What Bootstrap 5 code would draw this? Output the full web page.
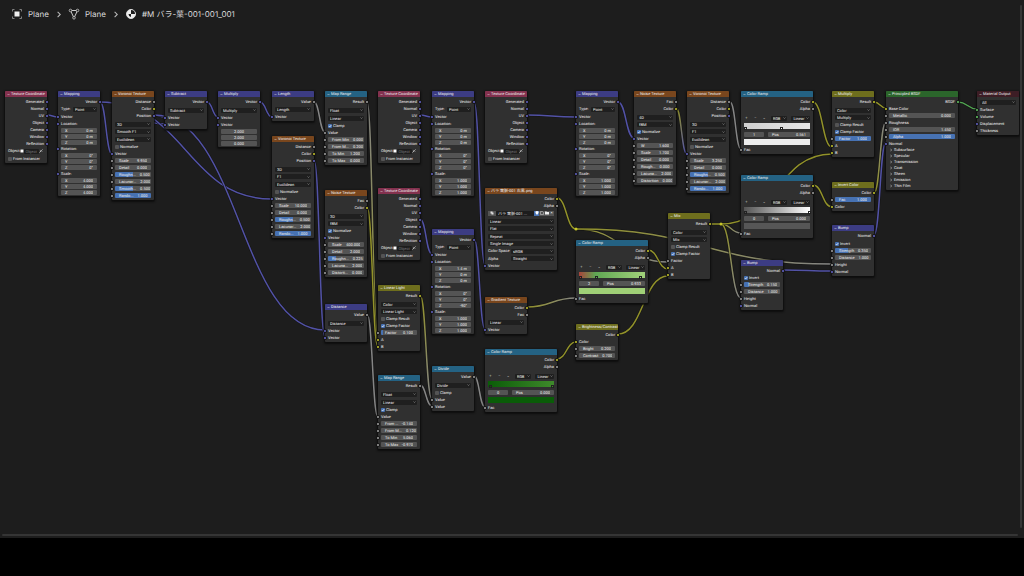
<!DOCTYPE html>
<html lang="en">
<head>
<meta charset="utf-8">
<meta name="viewport" content="width=device-width, initial-scale=1">
<title>Shader Editor</title>
<link href="https://cdn.jsdelivr.net/npm/bootstrap@5.3.0/dist/css/bootstrap.min.css" rel="stylesheet">
<style>
body{background:#000;color:#dcdcdc;font-family:Inter,"Noto Sans CJK JP",sans-serif;text-rendering:geometricPrecision}
input,select,button{text-rendering:geometricPrecision}
.editor{background:#1d1d1d;height:calc(100vh - 38px)}
.crumbs{font-size:8px;line-height:12px;padding:8px 11px;gap:6px}
.crumbs a{color:#dcdcdc;gap:5px}
.crumbs svg{width:12px;height:12px}
.crumbs .sep{width:7px}
.graph{inset:0;font-family:Roboto,"Noto Sans CJK JP",sans-serif}
.wires{width:100%;height:100%;left:0;top:0}
.wires path{fill:none;stroke-width:1.5}
.wires .casing{stroke:#141414;stroke-width:2.5}
.scroll-v{right:2px;top:5px;bottom:10px;width:2px;background:#353535}
.scroll-h{left:2px;right:6px;bottom:2px;height:2px;background:#353535}
.node{width:42px;background:#303030;border-radius:1px;padding-bottom:1px;font-size:4px;color:#f0f0f0;box-shadow:0 1px 2px 1px #0d0d0d}
.node.wide{width:72px}
.node-head{height:6px;margin-bottom:1px;line-height:6px;padding-left:2px;gap:1px;font-size:4px;border-radius:1px 1px 0 0;white-space:nowrap}
.node-head svg{width:3px;height:3px;flex:none}
.tone-input{background:#83314e}.tone-vector{background:#3c3c83}.tone-texture{background:#79461d}
.tone-convert{background:#246283}.tone-color{background:#6e6e1d}.tone-shader{background:#2b652b}.tone-output{background:#3d1d25}
.line{height:7px;line-height:7px;padding:0 3px;white-space:nowrap}
.line.tall{height:8px;line-height:8px}
.line.short{height:6px;line-height:6px}
.space{height:1px}
.socket{width:2px;height:2px;border-radius:50%;top:3px;box-shadow:0 0 0 1px #151515}
.socket.in{left:-1px}.socket.out{right:-1px}
.v{background:#6363c7}.y{background:#c7c729}.g{background:#a1a1a1}.s{background:#63c763}
.pick,.slot,.number{font-size:4px;line-height:5px;height:5px;border:0;border-radius:1px;color:#f0f0f0;padding:0 2px;min-width:0;box-shadow:none}
.pick{appearance:none;width:100%;background:#1f1f1f url("data:image/svg+xml,%3Csvg xmlns='http://www.w3.org/2000/svg' viewBox='0 0 6 4'%3E%3Cpath d='M1 1l2 2 2-2' fill='none' stroke='%23aaa'/%3E%3C/svg%3E") no-repeat right 1px center/3px 2px}
.pick.type{width:24px}.pick.image{width:43px}.pick.mode{width:17px}.pick.curve{width:19px}
.slot{background:#1d1d1d}
.slot.object{width:15px;padding:0 1px}
.slot::placeholder{color:#777}
.number{background:#545454;overflow:hidden}
.number.index{width:20px}
.number label{font-size:4px;line-height:5px}
.number > input{all:unset;width:14px;height:5px;text-align:right;font-size:4px;line-height:5px;color:#f0f0f0}
.tick{appearance:none;width:4px;height:4px;border-radius:1px;background:#545454;margin:0 1px 0 0}
.tick:checked{background:#4772b3 url("data:image/svg+xml,%3Csvg xmlns='http://www.w3.org/2000/svg' viewBox='0 0 8 8'%3E%3Cpath d='M1.500 4l2 2 3-4' fill='none' stroke='%23fff' stroke-width='1.300'/%3E%3C/svg%3E") center/4px 4px}
.tool{border:0;background:#545454;color:#eee;padding:0;width:5px;height:5px;line-height:4px;font-size:4px}
.tool.browse{width:8px}
.tool.on{background:#4772b3}
.tool svg{width:4px;height:4px;display:block;margin:auto}
.flat{border:0;background:none;padding:0;color:#c0c0c0;font-size:4px;line-height:8px;width:5px}
.ramp{height:6px;margin:0 3px}
.stop{width:3px;height:3px;bottom:-1px;margin-left:-1px;border:1px solid #222}
.swatch{height:6px;margin:1px 3px 1px}
.panel{border:0;background:none;color:#f0f0f0;display:flex;align-items:center;font-size:4px;line-height:6px;height:6px;padding:0 0 0 4px;gap:2px}
.panel svg{width:2px;height:4px}
.mini{width:4px;height:4px}
</style>
</head>
<body class="vh-100 overflow-hidden">
<main class="editor position-relative overflow-hidden">
  <div class="graph position-absolute" id="graph">
    <svg class="wires position-absolute" id="wires" aria-hidden="true"></svg>
  </div>
  <nav class="crumbs d-flex align-items-center position-relative" aria-label="Context">
    <a href="#" class="d-flex align-items-center text-decoration-none">
      <svg viewBox="0 0 12 12"><rect x="3.500" y="3.500" width="5" height="5" fill="#eee"/><path d="M1.500 3.500v-2h2M8.500 1.500h2v2M10.500 8.500v2h-2M3.500 10.500h-2v-2" fill="none" stroke="#999" stroke-width=".8"/></svg>Plane</a>
    <svg class="sep" viewBox="0 0 8 12"><path d="M3 3.500l3 3-3 3" fill="none" stroke="#bbb" stroke-width="1.200"/></svg>
    <a href="#" class="d-flex align-items-center text-decoration-none">
      <svg viewBox="0 0 12 12"><path d="M2.500 2.500h7L6 10z" fill="none" stroke="#ccc"/><g fill="#1d1d1d" stroke="#ccc" stroke-width=".8"><circle cx="2.500" cy="2.500" r="1.300"/><circle cx="9.500" cy="2.500" r="1.300"/><circle cx="6" cy="9.800" r="1.300"/></g></svg>Plane</a>
    <svg class="sep" viewBox="0 0 8 12"><path d="M3 3.500l3 3-3 3" fill="none" stroke="#bbb" stroke-width="1.200"/></svg>
    <a href="#" class="d-flex align-items-center text-decoration-none">
      <svg viewBox="0 0 12 12"><circle cx="6" cy="6" r="4.500" fill="#eee" stroke="#ddd"/><path d="M6 2v4h4A4 4 0 0 0 6 2zM6 6H3.500A3 3 0 0 0 6 9z" fill="#1d1d1d"/></svg>#M バラ-葉-001-001_001</a>
  </nav>
  <div class="scroll-v position-absolute rounded"></div>
  <div class="scroll-h position-absolute rounded"></div>
</main>
<script src="https://cdn.jsdelivr.net/npm/bootstrap@5.3.0/dist/js/bootstrap.bundle.min.js"></script>
<script>
// Row builders. Each returns the markup of one line of a node.
let uid = 0;
const dot = (side, c) => c ? `<i class="socket position-absolute ${side} ${c}"></i>` : '';
const row = (html, cls = '', extra = '') => `<div class="line position-relative ${cls}">${extra}${html}</div>`;
const gap = () => '<div class="space"></div>';
const out = (t, c) => row(t, 'text-end', dot('out', c));
const inp = (t, c) => row(t, '', dot('in', c));
const pick = (t, h = 'tall') => row(`<select class="pick" aria-label="${t}"><option>${t}</option></select>`, h + ' d-flex align-items-center');
const pair = (l, t, h, w) => row(`<label for="f${++uid}">${l}</label><select class="pick ms-auto ${w}" id="f${uid}"><option>${t}</option></select>`, h + ' d-flex align-items-center');
const tick = (t, on) => row(`<input class="tick" type="checkbox" id="f${++uid}"${on ? ' checked' : ''}><label for="f${uid}">${t}</label>`, 'd-flex align-items-center');
// A number field; fill is the blue part in percent.
const num = (l, v, c, fill = 0, h = '') => row(`<div class="number d-flex flex-fill justify-content-between align-items-center px-1"${fill ? ` style="background-image:linear-gradient(90deg,#4772b3 ${fill}%,transparent ${fill}%)"` : ''}><label for="f${++uid}">${l}</label><input id="f${uid}" value="${v}"></div>`, h + ' d-flex align-items-center', dot('in', c));
const xyz = (a) => ['X', 'Y', 'Z'].map((n, i) => num(n, a[i], '', 0, 'short')).join('');
const panel = t => `<button class="panel"><svg viewBox="0 0 3 6"><path d="M.5 1l2 2-2 2" fill="none" stroke="#bbb"/></svg>${t}</button>`;

const texCoord = () => ['Generated', 'Normal', 'UV', 'Object', 'Camera', 'Window', 'Reflection'].map(t => out(t, 'v')).join('') +
  row(`<label for="f${++uid}">Object:</label><svg class="mini ms-auto" viewBox="0 0 8 8"><rect x="1" y="1" width="6" height="6" fill="#fff"/></svg><input class="slot object" id="f${uid}" placeholder="Object"><button class="flat" aria-label="Pick object"><svg class="mini d-block" viewBox="0 0 8 8"><path d="M1 7l3-3M3 2l3 3M5 3l2-2" fill="none" stroke="#ddd" stroke-width="1.500"/></svg></button>`, 'tall d-flex align-items-center') + tick('From Instancer', false);
const mapping = (loc, rot, sc) => out('Vector', 'v') + pair('Type:', 'Point', 'tall', 'type') + inp('Vector', 'v') + inp('Location:', 'v') + xyz(loc) + inp('Rotation:', 'v') + xyz(rot) + inp('Scale:', 'v') + xyz(sc);
const zero = ['0 m', '0 m', '0 m'], deg = ['0°', '0°', '0°'], one = ['1.000', '1.000', '1.000'];
const voronoi = (dim, feat, nums) => out('Distance', 'g') + out('Color', 'y') + out('Position', 'v') + gap() + pick(dim) + pick(feat, '') + pick('Euclidean') + tick('Normalize', false) + inp('Vector', 'v') + nums.map(n => num(n[0], n[1], 'g', n[2])).join('');
const noise = (dim, nums) => out('Fac', 'g') + out('Color', 'y') + gap() + pick(dim) + pick('fBM', '') + tick('Normalize', true) + inp('Vector', 'v') + nums.map(n => num(n[0], n[1], 'g', n[2])).join('');
const ramp = (i, pos, grad, swatch, stops) => out('Color', 'y') + out('Alpha', 'g') + gap() + gap() +
  row(`<button class="flat">+</button><button class="flat">−</button><button class="flat">⌄</button><select class="pick mode ms-auto" aria-label="Color mode"><option>RGB</option></select><select class="pick curve" aria-label="Interpolation"><option>Linear</option></select>`, 'tall d-flex align-items-center gap-1') + gap() +
  `<div class="ramp position-relative" style="background:${grad}">${stops.map(s => `<i class="stop position-absolute" style="left:${s[0]}%;background:${s[1]}"></i>`).join('')}</div>` + gap() + gap() +
  row(`<input class="number index text-center" aria-label="Stop" value="${i}"><div class="number d-flex flex-fill justify-content-between align-items-center px-1"><label for="f${++uid}">Pos</label><input id="f${uid}" value="${pos}"></div>`, 'd-flex align-items-center gap-1') +
  `<div class="swatch" style="background:${swatch}"></div>` + inp('Fac', 'g');
const mapRange = (nums) => out('Result', 'g') + gap() + pick('Float') + pick('Linear') + tick('Clamp', true) + inp('Value', 'g') + nums.map(n => num(n[0], n[1], 'g')).join('');
const mix = (mode) => out('Result', 'y') + gap() + pick('Color') + pick(mode, '') + tick('Clamp Result', false) + tick('Clamp Factor', true);

const image = () => out('Color', 'y') + out('Alpha', 'g') +
  row(`<button class="tool browse" aria-label="Browse image"><svg viewBox="0 0 8 8"><path d="M1 1h4v2h2v4H3V5H1z" fill="#ddd"/></svg></button><input class="slot flex-fill" size="1" aria-label="Image name" value="バラ 葉脈-001 ..."><button class="tool on" aria-label="Fake user"><svg viewBox="0 0 8 8"><path d="M1 1l3-1 3 1v3L4 8 1 4z" fill="#fff"/></svg></button><button class="tool" aria-label="New"><svg viewBox="0 0 8 8"><path d="M1 1h4l2 2v4H1z" fill="none" stroke="#ddd"/></svg></button><button class="tool" aria-label="Open"><svg viewBox="0 0 8 8"><path d="M0 1h3l1 1h4v5H0z" fill="#eee"/></svg></button><button class="tool" aria-label="Unlink">×</button>`, 'tall d-flex align-items-center gap-0') +
  pick('Linear') + pick('Flat', '') + pick('Repeat') + pick('Single Image', '') + pair('Color Space', 'sRGB', 'tall', 'image') + pair('Alpha', 'Straight', '', 'image') + inp('Vector', 'v');

const nodes = [
  [5, 91, 'input', 'Texture Coordinate', texCoord()],
  [58, 91, 'vector', 'Mapping', mapping(zero, deg, ['4.000', '4.000', '4.000'])],
  [112, 91, 'texture', 'Voronoi Texture', voronoi('3D', 'Smooth F1', [['Scale', '9.950'], ['Detail', '0.000'], ['Roughn...', '0.500', 50], ['Lacunar...', '2.000'], ['Smooth...', '0.500', 50], ['Rando...', '1.000', 100]])],
  [165, 91, 'vector', 'Subtract', out('Vector', 'v') + gap() + pick('Subtract') + inp('Vector', 'v') + inp('Vector', 'v')],
  [218, 91, 'vector', 'Multiply', out('Vector', 'v') + gap() + pick('Multiply') + inp('Vector', 'v') + inp('Vector', 'v') + ['2.000', '2.000', '0.000'].map(n => row(`<input class="number flex-fill text-center" size="1" aria-label="Vector component" value="${n}">`, 'short d-flex align-items-center')).join('')],
  [272, 91, 'vector', 'Length', out('Value', 'g') + pick('Length') + inp('Vector', 'v')],
  [325, 91, 'convert', 'Map Range', mapRange([['From Min', '0.000'], ['From M...', '0.200'], ['To Min', '1.200'], ['To Max', '0.000']])],
  [272, 136, 'texture', 'Voronoi Texture', voronoi('3D', 'F1', [['Scale', '10.000'], ['Detail', '0.000'], ['Roughn...', '0.500', 50], ['Lacunar...', '2.000'], ['Rando...', '1.000', 100]])],
  [325, 190, 'texture', 'Noise Texture', noise('3D', [['Scale', '400.000'], ['Detail', '2.000'], ['Roughn...', '0.225', 22], ['Lacuna...', '2.000'], ['Distorti...', '0.000']])],
  [325, 304, 'vector', 'Distance', out('Value', 'g') + gap() + pick('Distance') + inp('Vector', 'v') + inp('Vector', 'v')],
  [378, 91, 'input', 'Texture Coordinate', texCoord()],
  [432, 91, 'vector', 'Mapping', mapping(zero, deg, one)],
  [485, 91, 'input', 'Texture Coordinate', texCoord()],
  [378, 188, 'input', 'Texture Coordinate', texCoord()],
  [432, 229, 'vector', 'Mapping', mapping(['1.4 m', '0 m', '0 m'], ['0°', '0°', '-90°'], one)],
  [378, 285, 'color', 'Linear Light', mix('Linear Light') + num('Factor', '0.100', 'g', 6) + inp('A', 'y') + inp('B', 'y')],
  [378, 375, 'convert', 'Map Range', mapRange([['From ...', '-0.140'], ['From M...', '0.120'], ['To Min', '5.060'], ['To Max', '-0.970']])],
  [432, 366, 'convert', 'Divide', out('Value', 'g') + gap() + pick('Divide') + tick('Clamp', false) + inp('Value', 'g') + inp('Value', 'g')],
  [485, 188, 'texture', 'バラ 葉脈-001 右黒.png', image(), 'wide'],
  [485, 297, 'texture', 'Gradient Texture', out('Color', 'y') + out('Fac', 'g') + pick('Linear') + inp('Vector', 'v')],
  [485, 349, 'convert', 'Color Ramp', ramp(0, '0.000', 'linear-gradient(90deg,#0a5c08,#3f8a2b)', '#0a5c08', [[3, '#0a5c08'], [97, '#3f8a2b']]), 'wide'],
  [576, 240, 'convert', 'Color Ramp', ramp(2, '0.933', 'linear-gradient(90deg,#a8433a,#5fa653 25%,#9fd079 95%)', '#a0d077', [[2, '#b33'], [26, '#5fa653'], [92, '#9fd079']]), 'wide'],
  [576, 324, 'color', 'Brightness/Contrast', out('Color', 'y') + inp('Color', 'y') + num('Bright', '0.200', 'g') + num('Contrast', '0.700', 'g')],
  [576, 91, 'vector', 'Mapping', mapping(zero, deg, one)],
  [634, 91, 'texture', 'Noise Texture', noise('4D', [['W', '1.600'], ['Scale', '1.700'], ['Detail', '0.000'], ['Rough...', '0.000'], ['Lacuna...', '2.000'], ['Distortion', '0.000']])],
  [687, 91, 'texture', 'Voronoi Texture', voronoi('3D', 'F1', [['Scale', '3.250'], ['Detail', '0.000'], ['Roughn...', '0.500', 50], ['Lacunar...', '2.000'], ['Rando...', '1.000', 100]])],
  [741, 91, 'convert', 'Color Ramp', ramp(1, '0.561', 'linear-gradient(90deg,#cfcfcf,#e8e8e8)', '#ededed', [[2, '#ccc'], [56, '#fff']]), 'wide'],
  [741, 175, 'convert', 'Color Ramp', ramp(0, '0.000', 'linear-gradient(90deg,#555,#fff)', '#565656', [[2, '#555'], [98, '#fff']]), 'wide'],
  [668, 213, 'color', 'Mix', mix('Mix') + inp('Factor', 'g') + inp('A', 'y') + inp('B', 'y')],
  [741, 260, 'vector', 'Bump', out('Normal', 'v') + tick('Invert', true) + num('Strength', '0.150', 'g', 15) + num('Distance', '1.000', 'g') + inp('Height', 'g') + inp('Normal', 'v')],
  [832, 91, 'color', 'Multiply', mix('Multiply') + num('Factor', '1.000', 'g', 100) + inp('A', 'y') + inp('B', 'y')],
  [832, 182, 'color', 'Invert Color', out('Color', 'y') + num('Fac', '1.000', 'g', 100) + inp('Color', 'y')],
  [832, 225, 'vector', 'Bump', out('Normal', 'v') + gap() + tick('Invert', true) + num('Strength', '0.350', 'g', 35) + num('Distance', '1.000', 'g') + inp('Height', 'g') + inp('Normal', 'v')],
  [886, 91, 'shader', 'Principled BSDF', out('BSDF', 's') + inp('Base Color', 'y') + num('Metallic', '0.000', 'g') + inp('Roughness', 'g') + num('IOR', '1.450', 'g') + num('Alpha', '1.000', 'g', 100) + inp('Normal', 'v') + ['Subsurface', 'Specular', 'Transmission', 'Coat', 'Sheen', 'Emission', 'Thin Film'].map(panel).join(''), 'wide'],
  [977, 91, 'output', 'Material Output', pick('All') + inp('Surface', 's') + inp('Volume', 's') + inp('Displacement', 'v') + inp('Thickness', 'g')]
];
const graph = document.getElementById('graph');
graph.insertAdjacentHTML('beforeend', nodes.map(([x, y, tone, title, body, size = '']) =>
  `<section class="node position-absolute ${size}" style="left:${x}px;top:${y}px"><header class="node-head d-flex align-items-center tone-${tone}"><svg viewBox="0 0 6 6"><path d="M1 2l2 2 2-2" fill="none" stroke="#ddd"/></svg><span>${title}</span></header>${body}</section>`).join(''));

// Wires: start, end, colour at each end.
const hue = { v: '#5252a6', y: '#92922a', g: '#858585', s: '#52a652' };
const wires = [
  [47,115,58,117,'vv'],[100,102,112,154,'vv'],[100,102,165,124,'vv'],[100,102,272,199,'vv'],[154,115,165,117,'vv'],[154,115,325,330,'vv'],
  [207,102,218,117,'vv'],[260,102,272,117,'vv'],[314,102,325,132,'gg'],[367,102,378,340,'gy'],[367,207,378,347,'yy'],[314,160,325,337,'vv'],
  [367,314,378,417,'gg'],[420,295,432,399,'yg'],[420,385,432,406,'gg'],[474,376,485,407,'gg'],[557,359,576,342,'yy'],[618,334,668,276,'yy'],
  [527,307,576,298,'yg'],[420,115,432,117,'vv'],[474,102,485,265,'vv'],[420,219,432,254,'vv'],[474,239,485,329,'vv'],[527,115,576,117,'vv'],
  [557,198,576,229,'yy'],[576,229,668,262,'yg'],[576,229,832,264,'yg'],[648,250,668,269,'yy'],[618,102,634,138,'vv'],[676,108,687,154,'yv'],
  [730,102,741,149,'gg'],[813,102,832,147,'yy'],[813,185,832,207,'yy'],[710,224,721,224,'yy'],[721,224,741,233,'yg'],[721,224,741,298,'yg'],
  [721,224,832,154,'yy'],[783,270,832,271,'vv'],[874,102,886,108,'yy'],[874,193,886,122,'yg'],[874,235,886,142,'vv'],[958,102,977,109,'ss']
];
let defs = '', lines = '';
wires.forEach(([a, b, c, d, k], i) => {
  const h = (c - a) / 2, p = `M${a} ${b}C${a + h} ${b} ${c - h} ${d} ${c} ${d}`;
  defs += `<linearGradient id="w${i}" gradientUnits="userSpaceOnUse" x1="${a}" y1="${b}" x2="${c}" y2="${d}"><stop stop-color="${hue[k[0]]}"/><stop offset="1" stop-color="${hue[k[1]]}"/></linearGradient>`;
  // A wire of one colour needs no gradient.
  lines += `<path class="casing" d="${p}"/><path d="${p}" stroke="${k[0] === k[1] ? hue[k[0]] : `url(#w${i})`}"/>`;
});
document.getElementById('wires').innerHTML = `<defs>${defs}</defs>${lines}<circle cx="576" cy="229" r="1.500" fill="#c7c729"/><circle cx="721" cy="224" r="1.500" fill="#c7c729"/>`;
</script>
</body>
</html>
